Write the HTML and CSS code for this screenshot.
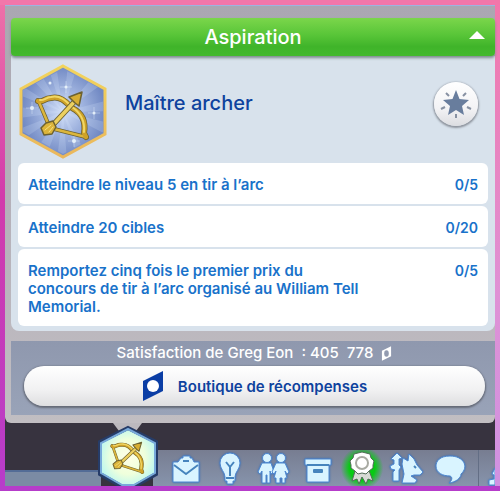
FILE: index.html
```html
<!DOCTYPE html>
<html lang="fr">
<head>
<meta charset="utf-8">
<meta name="viewport" content="width=device-width, initial-scale=1">
<title>Aspiration</title>
<link rel="stylesheet" href="styles.css">
</head>
<body>
<svg class="defs" aria-hidden="true">
  <defs>
    <radialGradient id="sky"><stop offset="0" stop-color="#d3e0f8"/><stop offset=".5" stop-color="#9eb2de"/><stop offset="1" stop-color="#7189c3"/></radialGradient>
    <linearGradient id="rim" x2="0" y2="1"><stop offset="0" stop-color="#f2d45c"/><stop offset="1" stop-color="#eab75c"/></linearGradient>
    <radialGradient id="mint"><stop offset="0" stop-color="#ffffe6"/><stop offset=".6" stop-color="#efffdc"/><stop offset="1" stop-color="#c2f8ee"/></radialGradient>
    <clipPath id="hexclip"><path d="M44 5 84 26V68L44 90 4 68V26Z"/></clipPath>
    <g id="bow" fill="none" stroke-linecap="round" stroke-linejoin="round">
      <path d="M20 38 31 64 67 73" stroke="#6d6230" stroke-width="4"/>
      <path d="M19 37C24 39 25 34 32 34C42 32 47 38 53 44C63 49 67 58 65 69L67 73" stroke="#6d6230" stroke-width="6"/>
      <path d="M20 38 31 64 67 73" stroke="#dcb63c" stroke-width="2.500"/>
      <path d="M19 37C24 39 25 34 32 34C42 32 47 38 53 44C63 49 67 58 65 69L67 73" stroke="#cfa228" stroke-width="4.500"/>
      <path d="M21 36C25 37 27 33 32 33C42 31 47 37 53 43C62 49 66 57 65 68" stroke="#f0d765" stroke-width="2"/>
      <path d="M32 63 55 38" stroke="#6d6230" stroke-width="5.500"/>
      <path d="M32 63 56 37" stroke="#ecd05f" stroke-width="3.500"/>
      <path d="M50 33 63 28 60 42 56 39 53 36Z" fill="#d7ad32" stroke="#6d6230" stroke-width="1.500"/>
      <path d="M34 57 37 63 33 70 25 71 22 64 27 59Z" fill="#dcb43a" stroke="#6d6230" stroke-width="1.500"/>
      <path d="M26 66 32 61M30 68 34 63" stroke="#f6e283" stroke-width="1"/>
    </g>
  </defs>
</svg>
<main class="frame">
  <section class="panel">
    <button class="header" type="button" aria-expanded="true">
      <span>Aspiration</span>
      <svg class="caret" viewBox="0 0 16 8" aria-hidden="true"><path d="M0 8 8 0 16 8Z" fill="#fff"/></svg>
    </button>
    <div class="card">
      <div class="hero">
        <svg class="emblem" viewBox="0 0 88 95" aria-hidden="true">
          <path d="M44 2 86 25V70L44 93 2 70V25Z" fill="url(#sky)" stroke="url(#rim)" stroke-width="3"/>
          <g clip-path="url(#hexclip)" fill="#dce9ff" opacity=".2">
            <path d="M44 48 28 0H37ZM44 48 49 0H59ZM44 48 78 8 86 18ZM44 48 90 36V47ZM44 48 90 59V72ZM44 48 70 95H59ZM44 48 48 95H38ZM44 48 26 95 15 88ZM44 48 0 78V65ZM44 48 0 54V43ZM44 48 0 31V20ZM44 48 10 12 19 5Z"/>
          </g>
          <g fill="#f2fbff" opacity=".85"><circle cx="31" cy="19" r="1.500"/><circle cx="47" cy="23" r="1.500"/><circle cx="13" cy="44" r="2"/><circle cx="75" cy="49" r="1.500"/><circle cx="55" cy="77" r="2"/><path d="M47 17V29M41 23H53M13 38V50M7 44H19M75 43V55M69 49H81M55 71V83M49 77H61" stroke="#f2fbff" stroke-width="1" opacity=".4"/></g>
          <use href="#bow"/>
        </svg>
        <h1>Maître archer</h1>
        <button class="star" type="button" aria-label="Aspirations">
          <svg viewBox="0 0 44 44" aria-hidden="true">
            <path d="M22 8 25.500 17 35 18 28 24 30 33 22 28 14 33 16 24 9 18 18.500 17Z" fill="#687d9d"/>
            <path d="M12 11 15 14M32 11 29 14M7 27 11 25M37 27 33 25M22 32V36" stroke="#8791a2" stroke-width="2"/>
          </svg>
        </button>
      </div>
      <ul class="goals">
        <li><span>Atteindre le niveau 5 en tir à l’arc</span><span class="count">0/5</span></li>
        <li><span>Atteindre 20 cibles</span><span class="count">0/20</span></li>
        <li><span>Remportez cinq fois le premier prix du<br>concours de tir à l’arc organisé au William Tell<br>Memorial.</span><span class="count">0/5</span></li>
      </ul>
    </div>
    <div class="rewards">
      <p>Satisfaction de Greg Eon&nbsp; : 405&nbsp; 778
        <svg class="point" viewBox="0 0 12 16" aria-hidden="true"><path d="M1 5 11 0V11L1 16Z" fill="#fff"/><ellipse cx="6" cy="8" rx="2.500" ry="3.500" fill="#929bb0"/></svg>
      </p>
      <button class="shop" type="button">
        <svg viewBox="0 0 22 32" aria-hidden="true"><path d="M1 11 21 1V21L1 31Z" fill="#0b3ea5"/><circle cx="11" cy="16" r="6" fill="#fff"/></svg>
        <span>Boutique de récompenses</span>
      </button>
    </div>
  </section>
  <nav class="dock">
    <span class="ledge"></span>
    <button class="tab" type="button" aria-label="Aspiration">
      <svg viewBox="0 0 62 63" aria-hidden="true">
        <path d="M16 0H45L36 12H25Z" fill="#bcb9be"/>
        <path d="M31 5 59 19V51L38 63H24L3 51V19Z" fill="url(#mint)" stroke="#263c68" stroke-width="4"/>
        <path d="M31 6 58 20V50L37 62H25L4 50V20Z" fill="none" stroke="#78a9da" stroke-width="2"/>
        <g transform="translate(2 0) rotate(4 31 34) scale(.66)"><use href="#bow"/></g>
      </svg>
    </button>
    <div class="tools">
      <button type="button" aria-label="Carrière"><svg viewBox="0 0 36 36"><path d="M5 12H10L13 8H15V6H22V8H24L26 12H31V32H5Z"/><path class="line" d="M6 15 18 24 30 15M15 11H21"/></svg></button>
      <button type="button" aria-label="Compétences"><svg viewBox="0 0 36 36"><path d="M13 27C13 22 8 19 8 13A10 10 0 0 1 28 13C28 19 23 22 23 27V31H21V34H15V31H13Z"/><path class="line" d="M14 12 18 17 22 12M18 17V26M14 28H22"/></svg></button>
      <button type="button" aria-label="Relations"><svg viewBox="0 0 36 36"><path d="M6 13H15L18 22 15 24 14 21V33H11V25H10V33H6V21L4 24 2 22Z"/><circle cx="11" cy="8" r="4.500"/><path d="M20 13H29L33 22 31 24 29 21 31 28H29V33H26V28H24V33H20V28H18L20 21 18 24 16 22Z"/><circle cx="25" cy="8" r="4.500"/></svg></button>
      <button type="button" aria-label="Inventaire"><svg viewBox="0 0 36 36"><path d="M5 9H31V15H29V32H7V15H5Z"/><path class="line" d="M7 15H29M14 20H22V22H14Z"/></svg></button>
      <button class="active" type="button" aria-label="Récompenses"><svg viewBox="0 0 36 36"><path class="ribbon" d="M12 18 8 31 13 29 15 34 18 27 22 34 24 29 29 31 24 18Z"/><path class="rosette" d="m18 2 4 1 4 1 1 4 3 3-1 4 0 3-4 3-3 3-4-1-4 1-3-3-4-3 0-3-1-4 3-3 1-4 4-1Z"/><circle class="ring" cx="18" cy="13" r="6"/></svg></button>
      <button type="button" aria-label="Animaux"><svg viewBox="0 0 36 36"><path d="M9 3 14 8 11 9 11 15 13 17 11 20V31H5V22L7 20 3 19 2 16 6 14 6 10 3 9Z"/><path d="M15 8 20 11 21 4 26 9 29 15 35 22 32 25 26 25 23 26 29 30 27 33H14L16 24 14 14Z"/><path class="line" d="M26 16 28 18"/></svg></button>
      <button type="button" aria-label="Conversation"><svg viewBox="0 0 36 36"><path d="M18 6C8 6 4 11 4 16C4 23 11 26 18 26C21 27 20 31 17 33C24 32 29 28 29 24C37 17 32 6 18 6Z"/></svg></button>
      <span class="next"><svg viewBox="0 0 16 36" aria-hidden="true"><path d="M16 18 13 24 15 25V29L10 30V35H16Z"/></svg></span>
    </div>
  </nav>
</main>
</body>
</html>
```
FILE: styles.css
```css
* { box-sizing: border-box; }

body {
  margin: 0;
  min-height: 100vh;
  display: flex;
  padding: 5px;
  background:
    linear-gradient(#b63cca, #b63cca) bottom / 100% 5px no-repeat,
    linear-gradient(#f276aa, #f276aa) top / 100% 5px no-repeat,
    linear-gradient(#ee72a8, #d23bab 40%, #b63cca) left / 5px 100% no-repeat,
    linear-gradient(#f276aa, #df91d5 60%, #cf92e2) right / 5px 100% no-repeat;
  font-family: Inter, "Open Sans", sans-serif;
  font-weight: 500;
}

button {
  border: 0;
  padding: 0;
  background: none;
  font: inherit;
  color: inherit;
  cursor: pointer;
}

svg { display: block; }
.defs { position: absolute; width: 0; height: 0; }

.frame {
  flex: 1;
  min-width: 0;
  display: flex;
  flex-direction: column;
  background: #37333f;
}

.panel {
  padding: 12px 0 8px 6px;
  border-top: 1px solid #9cb4e0;
  border-radius: 0 0 6px 6px;
  background: linear-gradient(#aaa7b1, #b5b1ba 50%, #c1bec2);
}

.header {
  width: 100%;
  height: 38px;
  display: grid;
  grid-template-columns: 1fr auto 1fr;
  align-items: center;
  padding: 0 10px;
  border-radius: 4px;
  background: linear-gradient(#7bd64b, #58c538 45%, #40b42a 75%, #43b92d);
  box-shadow: 0 2px 3px #7c8c8c;
  color: #fff;
  font-size: 20px;
  position: relative;
}
.header span { grid-column: 2; }
.caret { justify-self: end; width: 16px; height: 8px; margin-bottom: 4px; }

.card {
  padding: 0 7px 5px;
  border-radius: 0 0 8px 8px;
  background: #d8e2ec;
}

.hero {
  height: 107px;
  display: flex;
  align-items: center;
  padding-right: 10px;
}
.emblem { width: 90px; height: 95px; margin-top: 4px; }
.hero h1 {
  flex: 1;
  margin: 0 0 13px 17px;
  color: #0e429e;
  font-size: 20px;
  font-weight: 500;
}
.star {
  width: 44px;
  height: 44px;
  margin-bottom: 12px;
  border-radius: 50%;
  background: linear-gradient(#fff, #f3f3f5 60%, #dcdde1);
  box-shadow: 0 1px 2px 1px #8e949d;
}
.star svg { width: 44px; height: 44px; }

.goals {
  display: grid;
  gap: 2px;
  margin: 0;
  padding: 0;
  list-style: none;
  color: #1972ca;
  font-size: 15px;
  font-weight: 600;
  line-height: 18px;
}
.goals li {
  display: flex;
  justify-content: space-between;
  gap: 16px;
  padding: 13px 10px 10px;
  border-radius: 6px;
  background: #fff;
}
.count { font-size: 14px; }

.rewards {
  margin-top: 10px;
  padding: 3px 10px 9px 13px;
  background: linear-gradient(#8f98ae, #99a3b8);
}
.rewards p {
  display: flex;
  justify-content: center;
  align-items: center;
  gap: 8px;
  margin: 0 0 4px;
  color: #fff;
  font-size: 15px;
  line-height: 18px;
}
.point { width: 11px; height: 15px; }
.shop {
  width: 100%;
  height: 40px;
  display: flex;
  align-items: center;
  justify-content: center;
  gap: 14px;
  border-radius: 20px;
  background: linear-gradient(#fff, #f1f1f2 60%, #dedee0);
  box-shadow: 0 1px 2px 1px #656a77;
  color: #0e429e;
  font-size: 15px;
  font-weight: 600;
}
.shop svg { width: 22px; height: 32px; }

.dock {
  flex: 1;
  min-height: 63px;
  display: flex;
  align-items: flex-end;
}
.ledge { width: 96px; height: 16px; border-top: 2px solid #536c96; background: #7b8ba4; }
.tab { width: 62px; height: 63px; margin: 0 -6px 0 -4px; z-index: 1; }
.tab svg { width: 62px; height: 63px; }

.tools {
  flex: 1;
  min-width: 0;
  height: 36px;
  display: flex;
  padding-left: 11px;
  overflow: hidden;
  background: linear-gradient(#777d91, #8794ac);
}
.tools button { width: 44px; display: grid; place-items: center; }
.tools svg {
  width: 36px;
  height: 36px;
  fill: #d9f4ff;
  stroke: #4d87cf;
  stroke-width: 1;
  stroke-linejoin: round;
  filter: drop-shadow(0 0 1px #376bb4);
}
.tools .line { fill: none; stroke: #4684bd; stroke-width: 2; }
.tools .active { background: radial-gradient(circle, #00d90b 0, #08c914 45%, transparent 75%); }
.tools .active svg { stroke: #526c58; filter: none; }
.ribbon { fill: #d7dbd5; }
.rosette { fill: #fff; }
.ring { fill: #fff; stroke: #a8aaa2; stroke-width: 2; }
.next { margin-left: auto; width: 17px; border-left: 1px solid #636e85; }
.next svg { width: 16px; }
```
